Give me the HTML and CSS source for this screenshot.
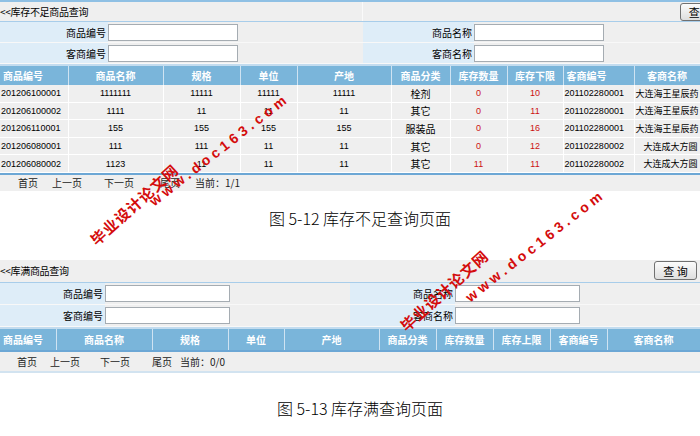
FILE: index.html
```html
<!DOCTYPE html>
<html lang="zh-CN">
<head>
  <meta charset="UTF-8">
  <title>库存查询页面</title>
  <link rel="stylesheet" href="styles.css">
</head>
<body>

  <div class="panel panel-short">
    <div class="bar">
      <div class="bar-left"><span class="title">&lt;&lt;库存不足商品查询</span></div>
      <div class="bar-right"><button class="btn btn-cut">查 询</button></div>
    </div>
    <table class="filter filter-a">
      <tr>
        <td class="lab">商品编号</td>
        <td class="inp"><input type="text"></td>
        <td class="lab">商品名称</td>
        <td class="inp"><input type="text"></td>
      </tr>
      <tr>
        <td class="lab">客商编号</td>
        <td class="inp"><input type="text"></td>
        <td class="lab">客商名称</td>
        <td class="inp"><input type="text"></td>
      </tr>
    </table>
    <table class="grid grid-a">
      <colgroup>
        <col style="width:68px"><col style="width:95px"><col style="width:77px"><col style="width:57px"><col style="width:94px">
        <col style="width:59px"><col style="width:57px"><col style="width:56px"><col style="width:71px"><col style="width:66px">
      </colgroup>
      <tr>
        <th class="left">商品编号</th><th>商品名称</th><th>规格</th><th>单位</th><th>产地</th>
        <th>商品分类</th><th>库存数量</th><th>库存下限</th><th class="left">客商编号</th><th>客商名称</th>
      </tr>
      <tr>
        <td class="num left">201206100001</td><td class="num">1111111</td><td class="num">11111</td><td class="num">11111</td><td class="num">11111</td>
        <td>栓剂</td><td class="num red">0</td><td class="num red">10</td><td class="num left">201102280001</td><td class="left cust">大连海王星辰药</td>
      </tr>
      <tr>
        <td class="num left">201206100002</td><td class="num">1111</td><td class="num">11</td><td class="num">11</td><td class="num">11</td>
        <td>其它</td><td class="num red">0</td><td class="num red">11</td><td class="num left">201102280001</td><td class="left cust">大连海王星辰药</td>
      </tr>
      <tr>
        <td class="num left">201206110001</td><td class="num">155</td><td class="num">155</td><td class="num">155</td><td class="num">155</td>
        <td>服装品</td><td class="num red">0</td><td class="num red">16</td><td class="num left">201102280001</td><td class="left cust">大连海王星辰药</td>
      </tr>
      <tr>
        <td class="num left">201206080001</td><td class="num">111</td><td class="num">111</td><td class="num">11</td><td class="num">11</td>
        <td>其它</td><td class="num red">0</td><td class="num red">12</td><td class="num left">201102280002</td><td class="left cust ind">大连成大方圆</td>
      </tr>
      <tr>
        <td class="num left">201206080002</td><td class="num">1123</td><td class="num">11</td><td class="num">11</td><td class="num">11</td>
        <td>其它</td><td class="num red">11</td><td class="num red">11</td><td class="num left">201102280002</td><td class="left cust ind">大连成大方圆</td>
      </tr>
    </table>
    <div class="pager pager-a">
      <span class="pg1">首页</span><span class="pg2">上一页</span><span class="pg3">下一页</span><span class="pg4">尾页</span><span>当前：1/1</span>
    </div>
  </div>
  <p class="caption cap-a">图 5-12 库存不足查询页面</p>

  <div class="panel panel-full">
    <div class="bar bar-b">
      <div class="bar-left"><span class="title">&lt;&lt;库满商品查询</span></div>
      <div class="bar-right"><button class="btn">查 询</button></div>
    </div>
    <table class="filter filter-b">
      <tr>
        <td class="lab">商品编号</td>
        <td class="inp"><input type="text"></td>
        <td class="lab">商品名称</td>
        <td class="inp"><input type="text"></td>
      </tr>
      <tr>
        <td class="lab">客商编号</td>
        <td class="inp"><input type="text"></td>
        <td class="lab">客商名称</td>
        <td class="inp"><input type="text"></td>
      </tr>
    </table>
    <table class="grid grid-b">
      <colgroup>
        <col style="width:56px"><col style="width:96px"><col style="width:76px"><col style="width:56px"><col style="width:95px">
        <col style="width:57px"><col style="width:57px"><col style="width:57px"><col style="width:57px"><col style="width:93px">
      </colgroup>
      <tr>
        <th class="left">商品编号</th><th>商品名称</th><th>规格</th><th>单位</th><th>产地</th>
        <th>商品分类</th><th>库存数量</th><th>库存上限</th><th>客商编号</th><th>客商名称</th>
      </tr>
    </table>
    <div class="pager pager-b">
      <span class="pg1">首页</span><span class="pg2">上一页</span><span class="pg3">下一页</span><span class="pg4">尾页</span><span>当前：0/0</span>
    </div>
  </div>
  <p class="caption cap-b">图 5-13 库存满查询页面</p>

  <div class="mark" style="left:98px;top:232px">毕业设计论文网</div>
  <div class="mark mark-url" style="left:156px;top:193px">www.doc163.com</div>
  <div class="mark" style="left:408px;top:318px">毕业设计论文网</div>
  <div class="mark mark-url" style="left:472px;top:289px">www.doc163.com</div>

</body>
</html>
```

FILE: styles.css
```css
body { margin: 0; width: 700px; height: 436px; overflow: hidden; position: relative; background: #fff; font-family: "Noto Sans CJK SC", "Liberation Sans", sans-serif; font-size: 11px; color: #000; }

.panel { width: 700px; background: #efefef; overflow: hidden; }
.panel-short { border-top: 2px solid #8fc0e4; }

.bar { display: flex; height: 19px; border-bottom: 1px solid #a8cdea; }
.bar-left { width: 362px; display: flex; align-items: center; border-right: 1px solid #fafafa; }
.bar-right { flex: 1; display: flex; align-items: center; justify-content: flex-end; }
.bar-b { height: 22px; }
.bar-b .bar-left { border-right: none; }
.title { font-size: 10px; letter-spacing: -0.3px; }

.btn { height: 18px; padding: 0 6px; font-family: "Noto Sans CJK SC", sans-serif; font-size: 11px; line-height: 14px; border: 1px solid #707070; border-radius: 3px; background: linear-gradient(#fbfbfb, #dedede); margin-right: 3px; }
.btn-cut { margin-right: -22px; width: 42px; }
.bar-b .btn { width: 43px; height: 19px; }

.filter { border-collapse: collapse; width: 700px; }
.filter td { height: 20px; padding: 0; border-bottom: 1px solid #f8f8f8; }
.filter .lab { background: #deedf8; text-align: right; padding-right: 2px; font-size: 10px; }
.filter input { width: 130px; height: 17px; box-sizing: border-box; border: 1px solid #a5acb2; background: #fff; margin: 0; display: block; }
.filter-a .lab:nth-child(1) { width: 106px; }
.filter-a .inp:nth-child(2) { width: 255px; }
.filter-a .lab:nth-child(3) { width: 109px; }
.filter-b td { height: 21px; }
.filter-b .lab:nth-child(1) { width: 103px; }
.filter-b .inp:nth-child(2) { width: 245px; }
.filter-b .lab:nth-child(3) { width: 103px; }
.filter-b input { width: 125px; }

.grid { border-collapse: collapse; table-layout: fixed; width: 700px; border-top: 2px solid #c3dcef; }
.grid th { height: 19px; padding: 0; background: #7ab5da; color: #fff; font-size: 10px; font-weight: bold; border-right: 1px solid #cfe3f2; white-space: nowrap; overflow: hidden; }
.grid td { height: 16.6px; padding: 0; background: #efefef; border-right: 1px solid #fff; border-bottom: 1px solid #fff; text-align: center; white-space: nowrap; overflow: hidden; font-size: 10px; }
.grid .left { text-align: left; padding-left: 1px; }
.grid th.left { padding-left: 3px; }
.grid .cust { font-size: 9px; }
.grid .ind { padding-left: 9px; }
.grid .num { font-family: "Liberation Sans", sans-serif; font-size: 9px; }
.grid .red { color: #cc1111; }
.grid-b th { height: 21px; }

.pager { display: flex; align-items: center; height: 16px; padding-left: 18px; font-size: 10px; color: #222; border-top: 2px solid #6ca7d5; }
.pager-a .pg1 { width: 34px; }
.pager-a .pg2 { width: 52px; }
.pager-a .pg3 { width: 56px; }
.pager-a .pg4 { width: 35px; }
.pager-b { height: 19px; padding-left: 17px; border-bottom: 2px solid #d2e3f0; }
.pager-b .pg1 { width: 33px; }
.pager-b .pg2 { width: 50px; }
.pager-b .pg3 { width: 52px; }
.pager-b .pg4 { width: 28px; }

.caption { margin: 0; text-align: center; padding-left: 20px; font-size: 16px; font-weight: 300; }
.cap-a { height: 69px; line-height: 54px; }
.cap-b { padding-top: 23px; }

.mark { position: absolute; color: #d40c0c; font-weight: bold; font-size: 15px; line-height: 16px; white-space: nowrap; transform-origin: 0 100%; transform: rotate(-42deg); letter-spacing: 1px; }
.mark-url { font-family: "Liberation Sans", sans-serif; font-size: 14px; letter-spacing: 4px; transform: rotate(-38deg); }
```
